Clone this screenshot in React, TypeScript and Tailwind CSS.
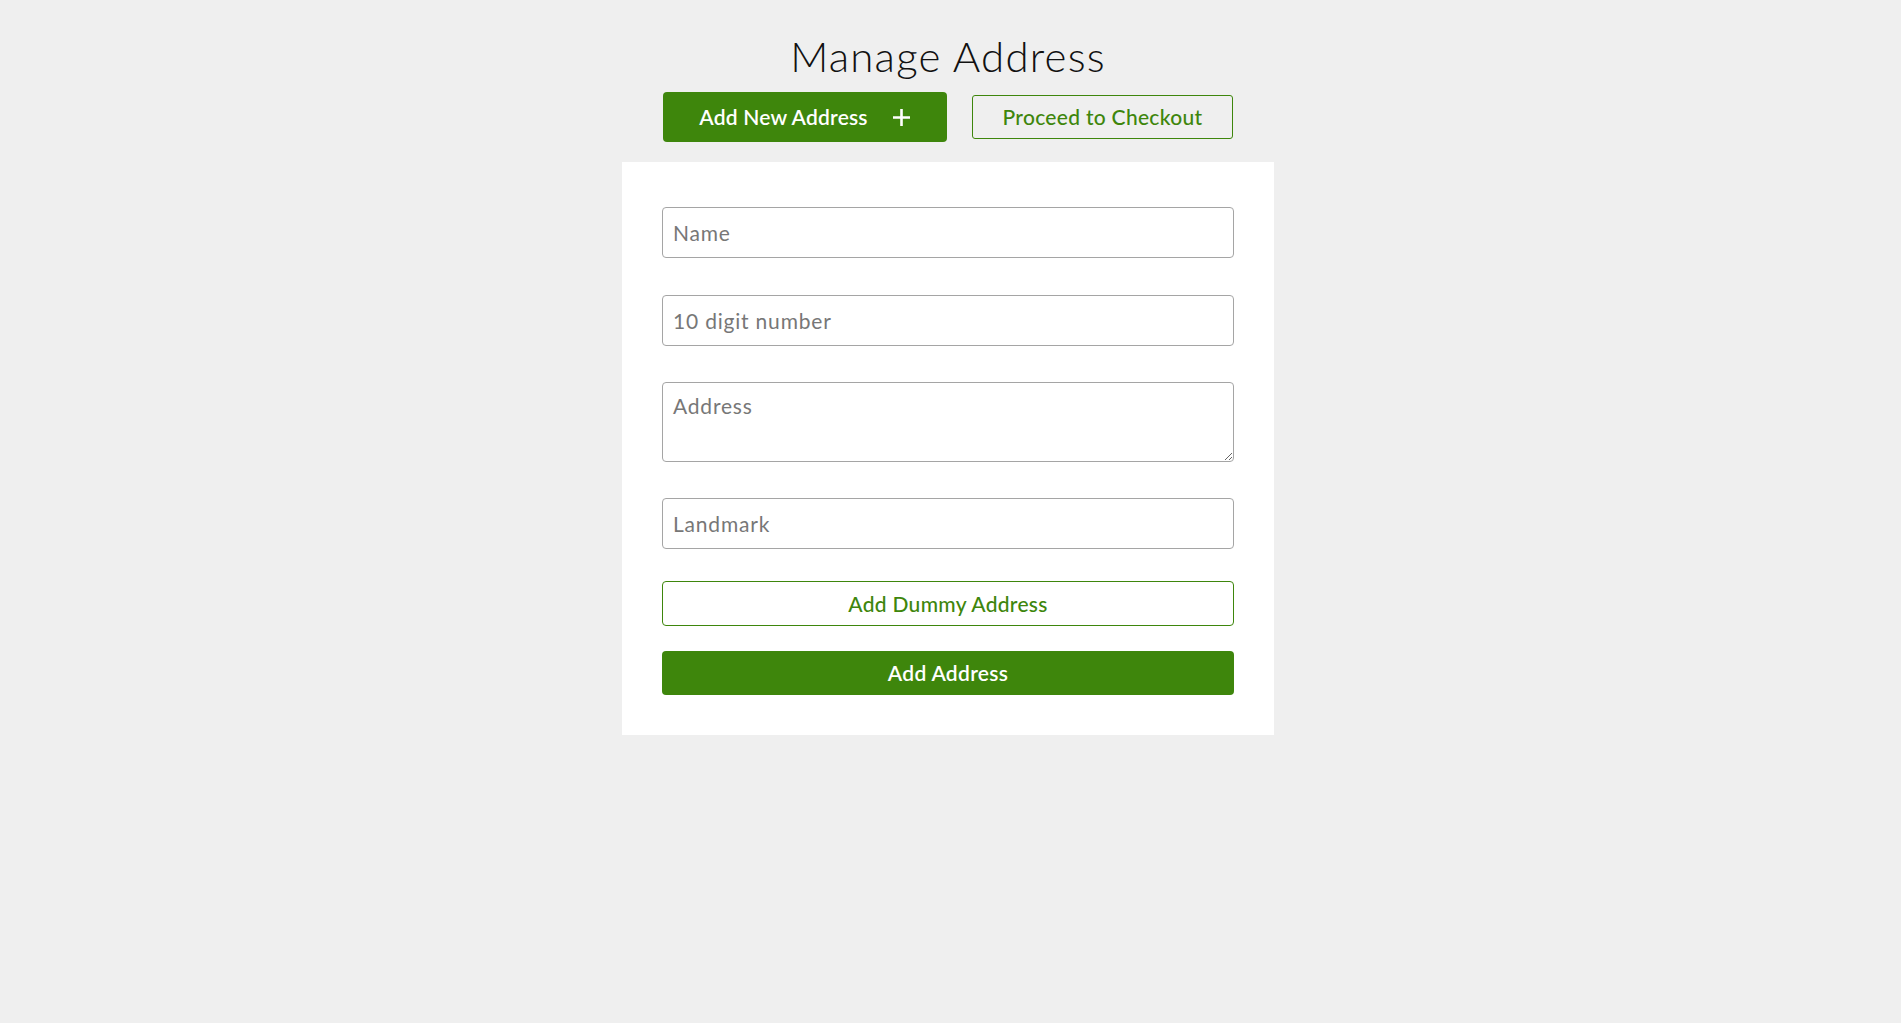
import React from "react";

export default function App() {
  const font = { fontFamily: "Lato, 'Open Sans', sans-serif" };
  return (
    <div
      className="min-h-screen w-full bg-[#efefef] flex flex-col items-center pr-[5px]"
      style={font}
    >
      <h1 className="mt-[32px] text-[42px] leading-[48px] font-light text-[#111] tracking-[1.2px]">
        Manage Address
      </h1>
      <div className="mt-[12px] flex items-center gap-[25px]">
        <button className="w-[284px] h-[50px] rounded-[4px] bg-[#3e860c] text-white text-[21px] tracking-[0.2px] font-semibold flex items-center justify-center gap-[24px]">
          <span>Add New Address</span>
          <svg width="19" height="19" viewBox="0 0 19 19">
            <path d="M9.5 1v17M1 9.5h17" stroke="white" strokeWidth="2.6" />
          </svg>
        </button>
        <button className="w-[261px] h-[44px] rounded-[3px] border border-[#3e860c] bg-transparent text-[#3e860c] text-[21px] tracking-[0.3px] font-medium flex items-center justify-center">
          Proceed to Checkout
        </button>
      </div>
      <div className="mt-[20px] w-[652px] bg-white px-[40px] pt-[45px] pb-[40px] flex flex-col">
        <input
          placeholder="Name"
          className="h-[51px] w-full rounded-[4px] border border-[#a5a5a5] px-[10px] text-[21px] tracking-[0.8px] placeholder:text-[#777] outline-none"
        />
        <input
          placeholder="10 digit number"
          className="mt-[37px] h-[51px] w-full rounded-[4px] border border-[#a5a5a5] px-[10px] text-[21px] tracking-[0.8px] placeholder:text-[#777] outline-none"
        />
        <textarea
          placeholder="Address"
          className="mt-[36px] h-[80px] w-full rounded-[4px] border border-[#a5a5a5] px-[10px] pt-[9px] text-[21px] tracking-[0.8px] leading-[28px] placeholder:text-[#777] outline-none"
        />
        <input
          placeholder="Landmark"
          className="mt-[36px] h-[51px] w-full rounded-[4px] border border-[#a5a5a5] px-[10px] text-[21px] tracking-[0.8px] placeholder:text-[#777] outline-none"
        />
        <button className="mt-[32px] h-[45px] w-full rounded-[4px] border border-[#3e860c] bg-white text-[#3e860c] text-[21px] tracking-[0.3px] font-medium">
          Add Dummy Address
        </button>
        <button className="mt-[25px] h-[44px] w-full rounded-[4px] bg-[#3e860c] text-white text-[21px] tracking-[0.3px] font-semibold">
          Add Address
        </button>
      </div>
    </div>
  );
}
